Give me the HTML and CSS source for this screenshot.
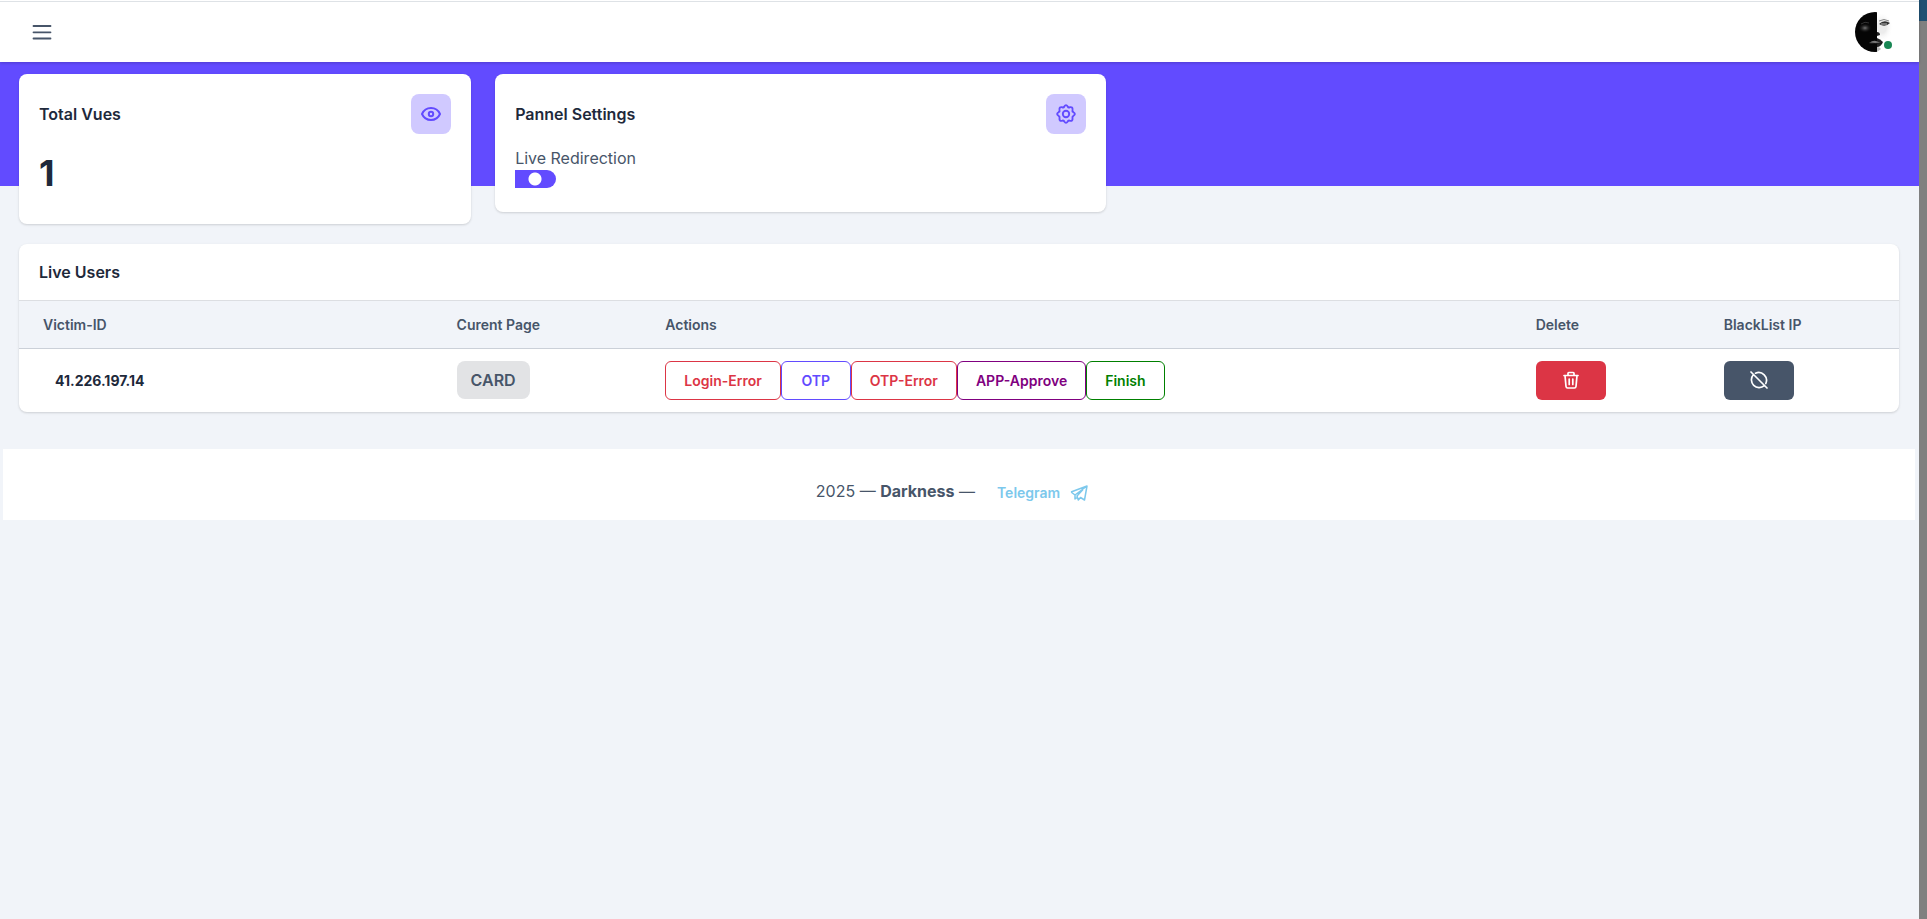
FILE: index.html
```html
<!DOCTYPE html>
<html lang="en">
<head>
    <meta charset="UTF-8">
    <meta name="viewport" content="width=device-width, initial-scale=1.0">
    <title>Dashboard</title>
    <link rel="stylesheet" href="styles.css">
</head>
<body>
    <div class="page">
        <header class="navbar">
            <button type="button" class="nav-toggle" aria-label="Menu">
                <svg width="24" height="24" viewBox="0 0 24 24" fill="none" stroke="currentColor" stroke-width="1.8" stroke-linecap="round"><path d="M3.500 6h17M3.500 12.300h17M3.500 18.500h17"/></svg>
            </button>
            <a href="#" class="avatar" aria-label="Profile">
                <svg width="40" height="40" viewBox="0 0 40 40">
                    <defs>
                        <clipPath id="round"><circle cx="20" cy="20" r="20"/></clipPath>
                        <radialGradient id="cheek"><stop offset="0" stop-color="#777"/><stop offset="1" stop-color="#050505" stop-opacity="0"/></radialGradient>
                        <radialGradient id="light"><stop offset="0.4" stop-color="#ececec"/><stop offset="1" stop-color="#fff" stop-opacity="0"/></radialGradient>
                    </defs>
                    <g clip-path="url(#round)">
                        <rect width="40" height="40" fill="#fff"/>
                        <ellipse cx="27" cy="15" rx="11" ry="15" fill="url(#light)"/>
                        <rect width="22" height="40" fill="#050505"/>
                        <ellipse cx="10" cy="16" rx="7" ry="5" fill="url(#cheek)"/>
                        <path d="M6 12q4-3 8-1" stroke="#333" fill="none"/>
                        <path d="M24 12q5-5 11-1q-5 5-11 1z" fill="#333"/>
                        <path d="M24 9q5-3 10 0" stroke="#888" fill="none"/>
                        <path d="M26 12h6" stroke="#bbb"/>
                        <path d="M22 20q3 0 3 3l-3 1z" fill="#222"/>
                        <path d="M22 26q3 1 6 4q-2 5-6 5z" fill="#222"/>
                        <path d="M22 35q3 0 4 2l-4 3z" fill="#bbb"/>
                        <path d="M14 31q4-3 7-2l5 2q-6 1-12 0z" fill="#777"/>
                        <path d="M14 31q6 1 13 0" stroke="#111" fill="none"/>
                    </g>
                </svg>
                <span class="status"></span>
            </a>
        </header>

        <main class="content">
            <div class="cards">
                <section class="card stat-card">
                    <div class="card-head">
                        <h4>Total Vues</h4>
                        <span class="icon-box">
                            <svg width="20" height="20" viewBox="0 0 20 20" fill="none" stroke="currentColor" stroke-width="2"><path d="M1 10C2.800 6 6 4 10 4s7.200 2 9 6c-1.800 4-5 6-9 6s-7.200-2-9-6z"/><circle cx="10" cy="10" r="2.200"/></svg>
                        </span>
                    </div>
                    <p class="stat-value">1</p>
                </section>
                <section class="card settings-card">
                    <div class="card-head">
                        <h4>Pannel Settings</h4>
                        <span class="icon-box">
                            <svg width="20" height="20" viewBox="0 0 20 20" fill="none" stroke="currentColor" stroke-width="1.900" stroke-linejoin="round"><path d="M8.300 2.500Q10 -.2 11.700 2.500Q12.300 3.800 13.700 3.300Q16.900 2.600 16.500 5.700Q16 7.300 17.500 8.300Q20.200 10 17.500 11.700Q16 12.700 16.500 14.300Q16.900 17.400 13.700 16.700Q12.300 16.200 11.700 17.500Q10 20.200 8.300 17.500Q7.700 16.200 6.300 16.700Q3.100 17.400 3.500 14.300Q4 12.700 2.500 11.700Q-.2 10 2.500 8.300Q4 7.300 3.500 5.700Q3.100 2.600 6.300 3.300Q7.700 3.800 8.300 2.500z"/><circle cx="10" cy="10" r="3.200"/></svg>
                        </span>
                    </div>
                    <label class="switch-label" for="redirection">Live Redirection</label>
                    <input type="checkbox" class="switch" id="redirection" checked>
                </section>
            </div>

            <section class="card users-card">
                <h4>Live Users</h4>
                <table>
                    <thead>
                        <tr>
                            <th class="col-id">Victim-ID</th>
                            <th class="col-page">Curent Page</th>
                            <th class="col-actions">Actions</th>
                            <th class="col-delete">Delete</th>
                            <th>BlackList IP</th>
                        </tr>
                    </thead>
                    <tbody>
                        <tr>
                            <td class="user-ip">41.226.197.14</td>
                            <td><span class="badge">CARD</span></td>
                            <td>
                                <div class="actions">
                                    <button type="button" class="btn danger">Login-Error</button>
                                    <button type="button" class="btn primary">OTP</button>
                                    <button type="button" class="btn danger">OTP-Error</button>
                                    <button type="button" class="btn purple">APP-Approve</button>
                                    <button type="button" class="btn green">Finish</button>
                                </div>
                            </td>
                            <td>
                                <button type="button" class="btn icon-btn delete" aria-label="Delete">
                                    <svg width="18" height="18" viewBox="0 0 18 18" fill="none" stroke="currentColor" stroke-width="1.700" stroke-linecap="round" stroke-linejoin="round"><path d="M2 4.500h14M6 4.500V2.300q0-.8.8-.8h4.400q.8 0 .8.8v2.200M3 4.500l1 11q.2 1.500 1.600 1.500h6.800q1.400 0 1.600-1.500l1-11M7.200 8v5.500M10.800 8v5.500"/></svg>
                                </button>
                            </td>
                            <td>
                                <button type="button" class="btn icon-btn block" aria-label="BlackList IP">
                                    <svg width="18" height="18" viewBox="0 0 18 18" fill="none" stroke="currentColor" stroke-width="1.700" stroke-linecap="round"><path d="M1 1l16 16M5.500 2.200A7.800 7.800 0 0 1 15.800 12.500M14.300 14.700A7.800 7.800 0 0 1 3.300 3.700"/></svg>
                                </button>
                            </td>
                        </tr>
                    </tbody>
                </table>
            </section>
        </main>

        <footer class="footer">
            <p>2025 — <strong>Darkness</strong> —</p>
            <a href="#" class="telegram">Telegram
                <svg width="18" height="18" viewBox="0 0 18 18" fill="none" stroke="currentColor" stroke-width="1.500" stroke-linejoin="round"><path d="M1 8L17 2l-2.500 14-4-2.500L8.300 16 7 12 13 5.500M1 8l4 3v4l2.200-1.500M5 11L17 2"/></svg>
            </a>
        </footer>
    </div>
    <div class="scrollbar"><div class="scroll-thumb"></div></div>
</body>
</html>
```
FILE: styles.css
```css
* {
    box-sizing: border-box;
}
body {
    margin: 0;
    min-height: 100vh;
    display: flex;
    background: #f1f4f9;
    color: #475569;
    font-family: Inter, sans-serif;
    font-size: 16px;
    line-height: 24px;
}
h4, p {
    margin: 0;
}
h4 {
    color: #1e293b;
    font-size: 16px;
    font-weight: 600;
}
.page {
    flex: 1;
}
.scrollbar {
    width: 8px;
    background: #808080;
}
.scroll-thumb {
    height: 21px;
    background: #205072;
}

/* top bar */
.navbar {
    position: relative;
    display: flex;
    justify-content: space-between;
    align-items: center;
    height: 62px;
    padding: 2px 24px 0 30px;
    background: linear-gradient(#fff 1px, #dee2e6 1px, #dee2e6 2px, #fff 2px);
    box-shadow: 0 1px 3px rgba(0, 0, 0, 0.2);
}
.nav-toggle {
    display: flex;
    padding: 0;
    border: none;
    background: none;
    color: #475569;
    cursor: pointer;
}
.avatar {
    position: relative;
    display: flex;
}
.status {
    position: absolute;
    right: 3px;
    bottom: 3px;
    width: 8px;
    height: 8px;
    border-radius: 50%;
    background: #198754;
}

/* cards */
.content {
    padding: 12px 20px 37px 19px;
    background: linear-gradient(#624bff 124px, transparent 124px);
}
.cards {
    display: flex;
    align-items: flex-start;
    gap: 24px;
}
.card {
    border-radius: 8px;
    background: #fff;
    box-shadow: 0 1px 3px rgba(0, 0, 0, 0.1), 0 1px 2px rgba(0, 0, 0, 0.06);
}
.stat-card {
    width: 24.05%;
    padding: 20px 20px 28px;
}
.settings-card {
    width: 32.5%;
    padding: 20px 20px 24px;
}
.card-head {
    display: flex;
    justify-content: space-between;
    align-items: center;
}
.icon-box {
    display: flex;
    justify-content: center;
    align-items: center;
    width: 40px;
    height: 40px;
    border-radius: 8px;
    background: #d0c9ff;
    color: #624bff;
}
.stat-value {
    margin: 17px 0 1px;
    color: #1e293b;
    font-size: 36px;
    font-weight: 700;
    line-height: 44px;
}
.switch-label {
    display: block;
    margin-top: 12px;
}
.switch {
    display: block;
    appearance: none;
    width: 41px;
    height: 18px;
    margin: 0;
    border-radius: 0 9px 9px 0;
    background: radial-gradient(circle at 20px 9px, #fff 6px, #624bff 7px);
}

/* live users */
.users-card {
    margin-top: 20px;
    overflow: hidden;
}
.users-card h4 {
    padding: 16px 20px;
}
table {
    width: 100%;
    table-layout: fixed;
    border-collapse: collapse;
    font-size: 14px;
}
thead {
    background: #f1f4f9;
}
th {
    height: 48px;
    padding: 0 24px;
    border-top: 1px solid #dcdee2;
    border-bottom: 1px solid #cbd0d8;
    font-weight: 600;
    text-align: left;
}
td {
    height: 63px;
    padding: 0 24px;
}
.col-id {
    width: 22%;
}
.col-page {
    width: 11.1%;
}
.col-actions {
    width: 46.3%;
}
.col-delete {
    width: 10%;
}
.user-ip {
    padding: 2px 24px 0 36px;
    color: #1e293b;
    font-weight: 700;
}
.badge {
    display: inline-block;
    padding: 7px 14px;
    border-radius: 8px;
    background: #e2e3e5;
    font-size: 16px;
    font-weight: 600;
}
.actions {
    display: flex;
}
.btn {
    min-width: 70px;
    height: 39px;
    padding: 0 18px;
    border: 1px solid currentColor;
    border-radius: 6px;
    background: #fff;
    font-family: inherit;
    font-size: 14px;
    font-weight: 600;
    cursor: pointer;
}
.danger {
    color: #dc3545;
}
.primary {
    color: #624bff;
}
.purple {
    color: #800080;
}
.green {
    color: #008000;
}
.icon-btn {
    display: flex;
    justify-content: center;
    align-items: center;
    border: none;
    color: #fff;
}
.delete {
    background: #dc3545;
}
.block {
    background: #475569;
}

/* footer */
.footer {
    display: flex;
    justify-content: center;
    align-items: center;
    gap: 22px;
    height: 71px;
    margin: 0 4px 0 3px;
    padding: 14px 14px 0 0;
    background: #fff;
}
.telegram {
    display: flex;
    align-items: center;
    gap: 10px;
    padding-top: 4px;
    color: #7cc8ec;
    font-size: 14px;
    font-weight: 600;
    text-decoration: none;
}
```
